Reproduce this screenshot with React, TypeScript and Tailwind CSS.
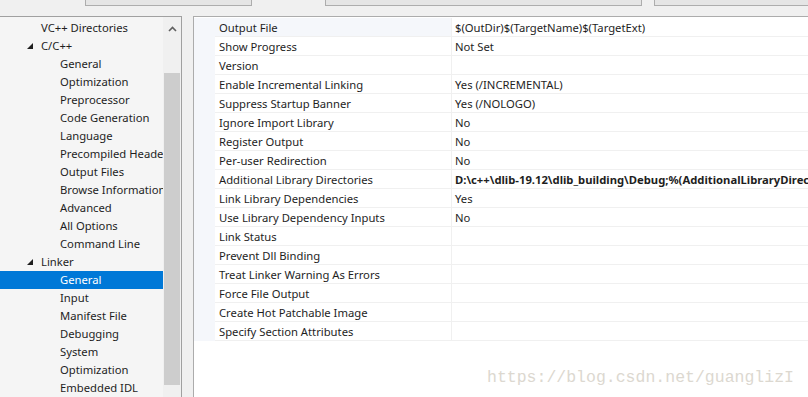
import React from 'react'

const font = { fontFamily: '"Noto Sans", "Open Sans", sans-serif' }

const tree: { label: string; level: 0 | 1; expanded?: boolean; selected?: boolean }[] = [
  { label: 'VC++ Directories', level: 0 },
  { label: 'C/C++', level: 0, expanded: true },
  { label: 'General', level: 1 },
  { label: 'Optimization', level: 1 },
  { label: 'Preprocessor', level: 1 },
  { label: 'Code Generation', level: 1 },
  { label: 'Language', level: 1 },
  { label: 'Precompiled Headers', level: 1 },
  { label: 'Output Files', level: 1 },
  { label: 'Browse Information', level: 1 },
  { label: 'Advanced', level: 1 },
  { label: 'All Options', level: 1 },
  { label: 'Command Line', level: 1 },
  { label: 'Linker', level: 0, expanded: true },
  { label: 'General', level: 1, selected: true },
  { label: 'Input', level: 1 },
  { label: 'Manifest File', level: 1 },
  { label: 'Debugging', level: 1 },
  { label: 'System', level: 1 },
  { label: 'Optimization', level: 1 },
  { label: 'Embedded IDL', level: 1 },
]

const props: { name: string; value?: string; bold?: boolean }[] = [
  { name: 'Output File', value: '$(OutDir)$(TargetName)$(TargetExt)' },
  { name: 'Show Progress', value: 'Not Set' },
  { name: 'Version' },
  { name: 'Enable Incremental Linking', value: 'Yes (/INCREMENTAL)' },
  { name: 'Suppress Startup Banner', value: 'Yes (/NOLOGO)' },
  { name: 'Ignore Import Library', value: 'No' },
  { name: 'Register Output', value: 'No' },
  { name: 'Per-user Redirection', value: 'No' },
  {
    name: 'Additional Library Directories',
    value: 'D:\\c++\\dlib-19.12\\dlib_building\\Debug;%(AdditionalLibraryDirectories)',
    bold: true,
  },
  { name: 'Link Library Dependencies', value: 'Yes' },
  { name: 'Use Library Dependency Inputs', value: 'No' },
  { name: 'Link Status' },
  { name: 'Prevent Dll Binding' },
  { name: 'Treat Linker Warning As Errors' },
  { name: 'Force File Output' },
  { name: 'Create Hot Patchable Image' },
  { name: 'Specify Section Attributes' },
]

function Expander() {
  return (
    <svg width="6" height="6" viewBox="0 0 6 6" className="shrink-0">
      <polygon points="6,0 6,6 0,6" fill="#1e1e1e" />
    </svg>
  )
}

function TreeView() {
  return (
    <div className="w-[163px] pt-[2px] overflow-hidden">
      {tree.map((item, i) => (
        <div
          key={i}
          className={`h-[18px] flex items-center whitespace-nowrap text-[11.25px] leading-[18px] ${
            item.selected ? 'bg-[#0078d7] text-white' : 'text-[#1e1e1e]'
          }`}
        >
          {item.level === 0 ? (
            <div className="flex items-center pl-[27px]">
              <div className="w-[14px] flex">{item.expanded && <Expander />}</div>
              <span>{item.label}</span>
            </div>
          ) : (
            <span className="pl-[60px]">{item.label}</span>
          )}
        </div>
      ))}
    </div>
  )
}

function Scrollbar() {
  return (
    <div className="w-[18px] bg-[#f0f0f0] flex flex-col">
      <div className="h-[22px] flex items-center justify-center pt-[2px]">
        <svg width="9" height="6" viewBox="0 0 9 6">
          <path d="M1 5 L4.5 1.5 L8 5" stroke="#606060" strokeWidth="1.6" fill="none" />
        </svg>
      </div>
      <div className="h-[34px]" />
      <div className="mx-[1px] h-[312px] bg-[#cdcdcd]" />
    </div>
  )
}

function PropertyGrid() {
  return (
    <div className="flex-1 border-t border-l border-[#acacac] bg-white pt-[1px] overflow-hidden">
      {props.map((p, i) => (
        <div key={i} className="flex h-[19px] text-[11.25px] leading-[18px] text-[#1e1e1e] whitespace-nowrap">
          <div className="w-[21px] shrink-0 bg-[#f5f7fb]" />
          <div
            className={`w-[236px] shrink-0 pl-[4px] pt-[1px] border-b border-[#f0f0f0] ${
              i === 0 ? 'bg-[#f5f7fb]' : ''
            }`}
          >
            {p.name}
          </div>
          <div
            className={`flex-1 pl-[3px] pt-[1px] border-b border-l border-[#f0f0f0] overflow-hidden ${
              p.bold ? 'font-bold' : ''
            }`}
          >
            {p.value}
          </div>
        </div>
      ))}
    </div>
  )
}

export default function App() {
  return (
    <div className="relative w-[808px] h-[397px] bg-[#f0f0f0] flex flex-col overflow-hidden" style={font}>
      {/* clipped toolbar combos */}
      <div className="h-[16px] flex shrink-0">
        <div className="ml-[85px] w-[167px] h-[6px] bg-[#e5e5e5] border-x border-b border-[#adadad]" />
        <div className="ml-[73px] w-[317px] h-[6px] bg-[#e5e5e5] border-x border-b border-[#adadad]" />
        <div className="ml-[12px] flex-1 h-[6px] bg-[#e5e5e5] border-l border-b border-[#adadad]" />
      </div>

      <div className="flex-1 flex">
        <div className="w-[182px] flex border-t border-r border-[#a0a0a0] bg-[#f5f5f5]">
          <TreeView />
          <Scrollbar />
        </div>
        <div className="w-[11px]" />
        <PropertyGrid />
      </div>

      <div
        className="absolute left-[487px] top-[368px] text-[16.5px] leading-[20px] text-[#dcd8d0]"
        style={{ fontFamily: '"Liberation Mono", monospace' }}
      >
        https://blog.csdn.net/guanglizI
      </div>
    </div>
  )
}
